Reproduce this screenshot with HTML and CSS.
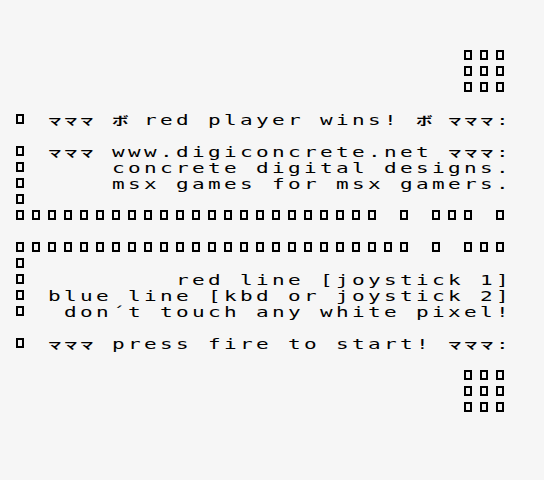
FILE: index.html
```html
<!DOCTYPE html>
<html>
<head>
<meta charset="utf-8">
<link rel="stylesheet" href="styles.css">
</head>
<body>
<div class="screen">
<div class="row c28"><span class="b"></span><span class="b"></span><span class="b"></span></div>
<div class="row c28"><span class="b"></span><span class="b"></span><span class="b"></span></div>
<div class="row c28"><span class="b"></span><span class="b"></span><span class="b"></span></div>
<div class="row"></div>
<div class="row"><span class="b"></span><span class="t"> <span class="k">マ</span><span class="k">マ</span><span class="k">マ</span> <span class="k j">ボ</span> red player wins! <span class="k j">ボ</span> <span class="k">マ</span><span class="k">マ</span><span class="k">マ</span>:</span></div>
<div class="row"></div>
<div class="row"><span class="b"></span><span class="t"> <span class="k">マ</span><span class="k">マ</span><span class="k">マ</span> www.digiconcrete.net <span class="k">マ</span><span class="k">マ</span><span class="k">マ</span>:</span></div>
<div class="row"><span class="b"></span><span class="t">     concrete digital designs.</span></div>
<div class="row"><span class="b"></span><span class="t">     msx games for msx gamers.</span></div>
<div class="row"><span class="b"></span></div>
<div class="row"><span class="b"></span><span class="b"></span><span class="b"></span><span class="b"></span><span class="b"></span><span class="b"></span><span class="b"></span><span class="b"></span><span class="b"></span><span class="b"></span><span class="b"></span><span class="b"></span><span class="b"></span><span class="b"></span><span class="b"></span><span class="b"></span><span class="b"></span><span class="b"></span><span class="b"></span><span class="b"></span><span class="b"></span><span class="b"></span><span class="b"></span><span class="sp"></span><span class="b"></span><span class="sp"></span><span class="b"></span><span class="b"></span><span class="b"></span><span class="sp"></span><span class="b"></span></div>
<div class="row"></div>
<div class="row"><span class="b"></span><span class="b"></span><span class="b"></span><span class="b"></span><span class="b"></span><span class="b"></span><span class="b"></span><span class="b"></span><span class="b"></span><span class="b"></span><span class="b"></span><span class="b"></span><span class="b"></span><span class="b"></span><span class="b"></span><span class="b"></span><span class="b"></span><span class="b"></span><span class="b"></span><span class="b"></span><span class="b"></span><span class="b"></span><span class="b"></span><span class="b"></span><span class="b"></span><span class="sp"></span><span class="b"></span><span class="sp"></span><span class="b"></span><span class="b"></span><span class="b"></span></div>
<div class="row"><span class="b"></span></div>
<div class="row"><span class="b"></span><span class="t">         red line [joystick 1]</span></div>
<div class="row"><span class="b"></span><span class="t"> blue line [kbd or joystick 2]</span></div>
<div class="row"><span class="b"></span><span class="t">  don´t touch any white pixel!</span></div>
<div class="row"></div>
<div class="row"><span class="b"></span><span class="t"> <span class="k">マ</span><span class="k">マ</span><span class="k">マ</span> press fire to start! <span class="k">マ</span><span class="k">マ</span><span class="k">マ</span>:</span></div>
<div class="row"></div>
<div class="row c28"><span class="b"></span><span class="b"></span><span class="b"></span></div>
<div class="row c28"><span class="b"></span><span class="b"></span><span class="b"></span></div>
<div class="row c28"><span class="b"></span><span class="b"></span><span class="b"></span></div>
<div class="row"></div>
</div>
</body>
</html>
```
FILE: styles.css
```css
html, body {
  margin: 0;
  padding: 0;
  background: #f6f6f6;
}
.screen {
  width: 544px;
  height: 480px;
  padding: 48px 16px;
  box-sizing: border-box;
  overflow: hidden;
}
.row {
  display: flex;
  height: 16px;
}
.c28 {
  padding-left: 448px;
}
.b {
  flex: none;
  width: 8px;
  height: 10px;
  box-sizing: border-box;
  border: 2px solid #000;
  margin: 2px 8px 0 0;
}
.sp {
  flex: none;
  width: 16px;
}
.t {
  flex: none;
  display: inline-block;
  white-space: pre;
  transform: scaleX(1.5);
  transform-origin: 0 0;
  font-family: "DejaVu Sans Mono", monospace;
  font-size: 14px;
  letter-spacing: 2.238px;
  line-height: 16px;
  height: 16px;
  color: #000;
}
.k {
  display: inline-block;
  width: 10.667px;
  letter-spacing: 0;
  font-family: "Noto Sans CJK JP", sans-serif;
  font-weight: bold;
  font-size: 9px;
  line-height: 9px;
  text-align: left;
  vertical-align: baseline;
}
.j {
  font-size: 11px;
  line-height: 11px;
}
```
